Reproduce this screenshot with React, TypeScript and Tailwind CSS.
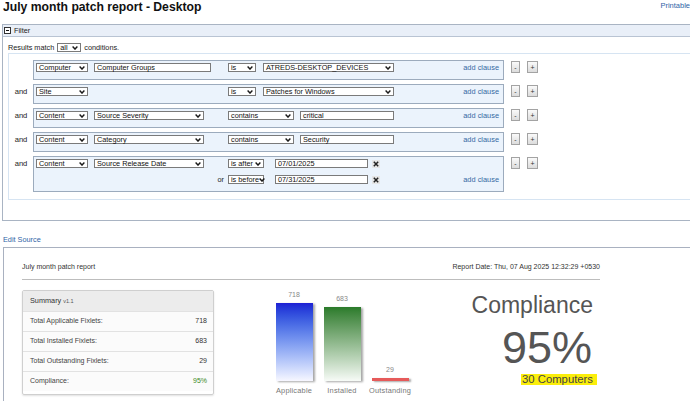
import type { ReactNode } from "react";

// 下拉框的小箭头
const Chevron = () => (
  <svg width="6" height="4" viewBox="0 0 6 4" className="shrink-0">
    <path d="M0.6 0.6 L3 3.1 L5.4 0.6" fill="none" stroke="#1a1a1a" strokeWidth="1.4" />
  </svg>
);

const Sel = ({ className, children }: { className: string; children?: ReactNode }) => (
  <div
    className={`flex h-[9px] shrink-0 items-center justify-between border border-[#7a7a7a] bg-white pl-[2px] pr-[2px] text-[7.3px] leading-none text-[#111] ${className}`}
  >
    <span className="whitespace-nowrap">{children}</span>
    <Chevron />
  </div>
);

const Field = ({ className, children }: { className: string; children?: ReactNode }) => (
  <div
    className={`flex h-[9px] shrink-0 items-center border border-[#7a7a7a] bg-white pl-[2px] text-[7.3px] leading-none text-[#111] ${className}`}
  >
    <span className="whitespace-nowrap">{children}</span>
  </div>
);

const ClearX = () => (
  <div className="ml-[4px] flex h-[8px] w-[8px] items-center justify-center bg-[#e6e6e6]">
    <svg width="6" height="6" viewBox="0 0 6 6">
      <path d="M0.8 0.8 L5.2 5.2 M5.2 0.8 L0.8 5.2" stroke="#222" strokeWidth="1.5" />
    </svg>
  </div>
);

const AddClause = () => (
  <span className="ml-auto whitespace-nowrap text-[7.4px] leading-[9px] text-[#3569a3]">add clause</span>
);

const MiniBtn = ({ label, className }: { label: string; className: string }) => (
  <div
    className={`flex h-[12px] items-center justify-center border border-[#a3a3a3] bg-gradient-to-b from-[#fafafa] to-[#dcdcdc] text-[7px] leading-none text-[#333] ${className}`}
  >
    {label}
  </div>
);

type Clause = { join: string; tall?: boolean; body: ReactNode };

const CLAUSES: Clause[] = [
  {
    join: "",
    body: (
      <>
        <Sel className="w-[52px]">Computer</Sel>
        <div className="w-[140px] shrink-0 pl-[6px]">
          <Field className="w-[117px]">Computer Groups</Field>
        </div>
        <Sel className="w-[28px]">is</Sel>
        <Sel className="ml-[7px] w-[131px]">ATREDS-DESKTOP_DEVICES</Sel>
        <AddClause />
      </>
    ),
  },
  {
    join: "and",
    body: (
      <>
        <Sel className="w-[52px]">Site</Sel>
        <div className="w-[140px] shrink-0" />
        <Sel className="w-[28px]">is</Sel>
        <Sel className="ml-[7px] w-[131px]">Patches for Windows</Sel>
        <AddClause />
      </>
    ),
  },
  {
    join: "and",
    body: (
      <>
        <Sel className="w-[52px]">Content</Sel>
        <div className="w-[140px] shrink-0 pl-[6px]">
          <Sel className="w-[110px]">Source Severity</Sel>
        </div>
        <Sel className="w-[66px]">contains</Sel>
        <Field className="ml-[6px] w-[94px]">critical</Field>
        <AddClause />
      </>
    ),
  },
  {
    join: "and",
    body: (
      <>
        <Sel className="w-[52px]">Content</Sel>
        <div className="w-[140px] shrink-0 pl-[6px]">
          <Sel className="w-[110px]">Category</Sel>
        </div>
        <Sel className="w-[66px]">contains</Sel>
        <Field className="ml-[6px] w-[94px]">Security</Field>
        <AddClause />
      </>
    ),
  },
  {
    join: "and",
    tall: true,
    body: (
      <>
        <Sel className="w-[52px]">Content</Sel>
        <div className="w-[128px] shrink-0 pl-[6px]">
          <Sel className="w-[110px]">Source Release Date</Sel>
        </div>
        <div className="flex w-[12px] shrink-0 flex-col gap-[7px]">
          <div className="h-[9px]" />
          <div className="h-[9px] pr-[4px] text-right text-[7.3px] leading-[9px] text-[#222]">or</div>
        </div>
        <div className="flex flex-col gap-[7px]">
          <div className="flex items-center">
            <Sel className="w-[36px]">is after</Sel>
            <Field className="ml-[11px] w-[93px]">07/01/2025</Field>
            <ClearX />
          </div>
          <div className="flex items-center">
            <Sel className="w-[36px]">is before</Sel>
            <Field className="ml-[11px] w-[93px]">07/31/2025</Field>
            <ClearX />
          </div>
        </div>
        <div className="ml-auto self-end pb-[2px]">
          <AddClause />
        </div>
      </>
    ),
  },
];

const SUMMARY = [
  { label: "Total Applicable Fixlets:", value: "718" },
  { label: "Total Installed Fixlets:", value: "683" },
  { label: "Total Outstanding Fixlets:", value: "29" },
  { label: "Compliance:", value: "95%", green: true },
];

export default function App() {
  return (
    <div className="h-[401px] w-[690px] overflow-hidden bg-white font-['Liberation_Sans',Arial,sans-serif] text-[#222]">
      {/* 标题 */}
      <div className="flex h-[14px]">
        <h1 className="pl-[3px] text-[12.2px] font-bold leading-[14px] text-[#111]">
          July month patch report - Desktop
        </h1>
        <span className="ml-auto whitespace-nowrap pt-[1px] text-[7.5px] leading-[9px] text-[#2f64a6]">
          Printable
        </span>
      </div>

      {/* Filter 面板 */}
      <div className="ml-[2px] mt-[10px] w-[720px] border border-[#a9b4c3]">
        <div className="flex h-[12px] items-center border-b border-[#b9c4d3] bg-[#e9eff8] pl-[1px]">
          <div className="flex h-[7px] w-[7px] items-center justify-center border border-[#333] bg-white">
            <div className="h-[1px] w-[3px] bg-[#111]" />
          </div>
          <span className="ml-[3px] text-[7.3px] leading-none text-[#222]">Filter</span>
        </div>

        <div className="pb-[20px] pl-[5px]">
          <div className="mt-[6px] flex h-[9px] items-center text-[7.3px] leading-none">
            <span>Results match</span>
            <Sel className="ml-[3px] w-[24px]">all</Sel>
            <span className="ml-[3px]">conditions.</span>
          </div>

          <div className="mt-[1px] flex w-[720px] flex-col gap-[4px] border border-[#d6e4f2] pb-[7px] pt-[6px]">
            {CLAUSES.map((c, i) => (
              <div key={i} className="flex">
                <div className="w-[24px] pt-[3px] text-center text-[7.6px] leading-[9px] text-[#222]">{c.join}</div>
                <div
                  className={`flex w-[471px] items-start border border-[#9cabbd] bg-[#ebf3fc] pl-[2px] pr-[4px] pt-[2px] ${
                    c.tall ? "h-[36px]" : "h-[20px]"
                  }`}
                >
                  {c.body}
                </div>
                <div className="ml-[7px] flex gap-[7px] pt-[1px]">
                  <MiniBtn label="-" className="w-[9px]" />
                  <MiniBtn label="+" className="w-[11px]" />
                </div>
              </div>
            ))}
          </div>
        </div>
      </div>

      <div className="ml-[3px] mt-[14px] h-[9px] text-[7.3px] leading-[9px] text-[#2f64a6]">Edit Source</div>

      {/* 报表 */}
      <div className="ml-[3px] mt-[3px] h-[200px] border-l border-t border-[#a9b1c0] pl-[18px]">
        <div className="w-[578px]">
          <div className="flex items-start pb-[8px] pt-[15px] text-[7px] leading-[8px] text-[#333]">
            <span>July month patch report</span>
            <span className="ml-auto">Report Date: Thu, 07 Aug 2025 12:32:29 +0530</span>
          </div>
          <div className="border-t border-[#bdbdbd]" />

          <div className="mt-[10px] flex">
            {/* Summary 表 */}
            <div className="w-[192px] rounded-[2px] border border-[#cfcfcf] shadow-[0_1px_2px_rgba(0,0,0,0.12)]">
              <div className="flex h-[20px] items-center bg-[#ececec] px-[7px] text-[7.3px] text-[#333]">
                <span>Summary</span>
                <span className="ml-[2px] text-[5.5px] text-[#555]">v1.1</span>
              </div>
              {SUMMARY.map((r) => (
                <div
                  key={r.label}
                  className="flex h-[20px] items-center justify-between border-t border-[#e2e2e2] bg-[#fbfbfb] pl-[7px] pr-[6px] text-[7px] text-[#444]"
                >
                  <span>{r.label}</span>
                  <span className={r.green ? "text-[#3b8a1e]" : "text-[#333]"}>{r.value}</span>
                </div>
              ))}
            </div>

            {/* 柱状图 */}
            <div className="ml-[56px] flex flex-col">
              <div className="flex h-[91px] items-end">
                <div className="flex w-[48px] flex-col items-center">
                  <span className="mb-[4px] text-[7px] leading-[8px] text-[#888]">718</span>
                  <div className="h-[78px] w-[37px] bg-gradient-to-b from-[#1f1fd4] to-[#f7f7ff] shadow-[2px_1px_2px_rgba(0,0,0,0.35)]" />
                </div>
                <div className="flex w-[48px] flex-col items-center">
                  <span className="mb-[4px] text-[7px] leading-[8px] text-[#888]">683</span>
                  <div className="h-[74px] w-[37px] bg-gradient-to-b from-[#2a7b2a] to-[#f7fbf7] shadow-[2px_1px_2px_rgba(0,0,0,0.35)]" />
                </div>
                <div className="flex w-[48px] flex-col items-center">
                  <span className="mb-[4px] text-[7px] leading-[8px] text-[#888]">29</span>
                  <div className="h-[3px] w-[37px] bg-[#e65a5a] shadow-[2px_1px_2px_rgba(0,0,0,0.35)]" />
                </div>
              </div>
              <div className="mt-[6px] flex text-[7.4px] leading-[8px] tracking-[0.2px] text-[#777]">
                <span className="w-[48px] text-center">Applicable</span>
                <span className="w-[48px] text-center">Installed</span>
                <span className="w-[48px] text-center">Outstanding</span>
              </div>
            </div>

            {/* 合规率 */}
            <div className="ml-auto mr-[3px] flex flex-col items-end">
              <span className="mt-[4px] pr-[4px] text-[23px] leading-none text-[#555]">Compliance</span>
              <span className="mt-[8px] pr-[5px] text-[45px] leading-none text-[#555]">95%</span>
              <span className="mt-[4px] bg-[#fbee0a] pl-[1px] pr-[4px] text-[11.3px] leading-[11px] text-[#444]">
                30 Computers
              </span>
            </div>
          </div>
        </div>
      </div>
    </div>
  );
}
